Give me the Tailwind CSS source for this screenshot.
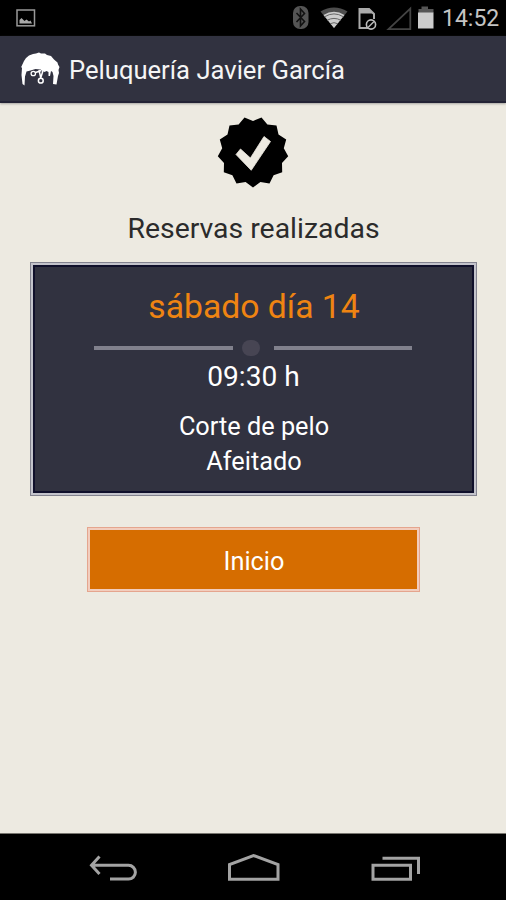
<!DOCTYPE html>
<html lang="es">
<head>
  <meta charset="UTF-8" />
  <meta name="viewport" content="width=device-width, initial-scale=1.0" />
  <title>Peluquería Javier García</title>
  <script src="https://cdn.jsdelivr.net/npm/@tailwindcss/browser@4"></script>
</head>
<body class="bg-[#edeae1] font-[Roboto,sans-serif]">
  <div class="flex flex-col w-[506px] h-[900px] overflow-hidden">

    <!-- Status bar -->
    <div class="flex items-center justify-between h-9 shrink-0 bg-black pl-4 pr-2">
      <svg class="w-5 h-[18px]" viewBox="0 0 20 18" fill="none">
        <rect x="1" y="1" width="17.5" height="15.8" stroke="#999" stroke-width="1.5" />
        <path d="M3.500 14.500V11l2-2 3 3 2-1.500 2.500 2 1.500-1 1.500 3z" fill="#aaa" />
      </svg>
      <div class="flex items-center">
        <svg class="w-[150px] h-9" viewBox="0 0 150 36" fill="none">
          <!-- Bluetooth -->
          <rect x="1" y="6" width="15.500" height="23" rx="7" fill="#555" />
          <path d="M4.500 13l8 8.500-4 4.500V9l4 4.500-8 8.500" stroke="#111" stroke-width="1.600" />
          <!-- Wifi -->
          <path d="M42 28L28.500 11.500Q42 3.500 55.500 11.500z" fill="#4d4d4d" />
          <path d="M42 28L31.500 15Q42 8.500 52.500 15z" fill="#ccc" />
          <path d="M32.500 16.800Q42 11 51.500 16.800M35 20.300Q42 16.500 49 20.300M38 23.800Q42 21.500 46 23.800" stroke="#666" />
          <!-- SIM -->
          <path d="M77.500 28H67.500V9h9.500l5 5v5" stroke="#aaa" stroke-width="2" />
          <path d="M67 8h9.500l5 5.500H67z" fill="#aaa" />
          <circle cx="79" cy="24.500" r="4.600" fill="#000" stroke="#bbb" stroke-width="1.600" />
          <path d="M76 27.500l6-6" stroke="#bbb" stroke-width="1.500" />
          <!-- Signal -->
          <path d="M96.500 29.200L118.300 8.500v20.700z" stroke="#444" stroke-width="1.800" />
          <!-- Battery -->
          <path d="M129.500 6.500h6.500V9h5.500v4H126.500V9h3z" fill="#555" />
          <path d="M126 12.500h15.500V28.500h-15.500z" fill="#ccc" />
        </svg>
        <span class="w-[56px] text-[23px] leading-9 pt-px text-[#c4c4c4] whitespace-nowrap">14:52</span>
      </div>
    </div>

    <!-- Action bar -->
    <header class="flex items-center h-[67px] shrink-0 bg-[#313240] border-b-2 border-[#232335] shadow-[0_1px_2px_#77777799] pl-[21px]">
      <svg class="w-[39px] h-[34px] mt-px" viewBox="0 0 39 34">
        <path d="M1.500 32L.5 23l.5-7-.8-1L3 9l2-3 3-2.500L12 2l3-.5L18 .5l2 1 4 0 2 1.500 4 1 3 3.500 3.500 3 .5 2 1.500 2.500-1 3 .5 3-1 3-1.500 8.500-3.500-.5.500-8-1-4-1.500-1-1 5-1.500 0 0-4-2-1-2 1-4-2.500-5-.5-5 1.500-4 1-1.500 5-.5 9z" fill="#fff" />
        <path d="M14.500 20.500l6-2M18 18l1.800 8M22.500 17l-2.800 9" stroke="#fff" stroke-width="1.500" fill="none" />
        <circle cx="12.300" cy="21.500" r="2.200" fill="none" stroke="#fff" stroke-width="1.300" />
        <circle cx="19.800" cy="28.700" r="2.400" fill="none" stroke="#fff" stroke-width="1.500" />
      </svg>
      <h1 class="mt-[4px] ml-[9px] text-[25.600px] text-[#f5f5f5] whitespace-nowrap">Peluquería Javier García</h1>
    </header>

    <main class="flex flex-col items-center grow pt-[13px]">
      <svg class="w-[72px] h-[72px]" viewBox="-36 -36 72 72">
        <path d="M0 35.500L7.400 30.100 16.500 31.400 20.600 23.200 29.200 20.200 29 11 35.200 4.300 30.800-3.700 33.200-12.600 25.500-17.600 23.500-26.600 14.400-27.500 8.500-34.500 0-31-8.500-34.500-14.400-27.500-23.500-26.600-25.500-17.600-33.200-12.600-30.800-3.700-35.200 4.300-29 11-29.200 20.200-20.600 23.200-16.500 31.400-7.400 30.100z" fill="#000" />
        <path d="M-17 2.500L-1.800 18.300 17.500-10.500 11-15.500-2.600 6-12.500-3z" fill="#edeae1" stroke="#edeae1" stroke-width=".8" />
      </svg>

      <h2 class="mt-[21px] pl-px text-[28.400px] leading-10 text-[#2b2b2b] whitespace-nowrap">Reservas realizadas</h2>

      <!-- Booking -->
      <section class="mt-[13px] w-[447px] h-[234px] shrink-0 border border-[#83838f] bg-[#c3c3cb] p-[2px]">
        <div class="flex flex-col items-center h-full border-2 border-[#10102b] bg-[#313240] text-white whitespace-nowrap">
          <p class="mt-[18px] pl-[2px] text-[33.700px] leading-[44px] text-[#ef8412]">sábado día 14</p>
          <div class="flex items-center w-[318px] h-4 mt-[11px]">
            <div class="w-[139px] h-1 bg-[#81818d]"></div>
            <div class="ml-[9px] w-[18px] h-4 rounded-full bg-[#474553]"></div>
            <div class="ml-auto w-[138px] h-1 bg-[#81818d]"></div>
          </div>
          <p class="mt-px pl-px text-[28.100px] leading-10">09:30 h</p>
          <p class="mt-[12px] pl-[2px] text-[25.300px] leading-[35px]">Corte de pelo</p>
          <p class="pl-[2px] text-[25.300px] leading-[35px]">Afeitado</p>
        </div>
      </section>

      <button class="mt-[31px] w-[333px] h-[65px] shrink-0 border border-[#e5a58e] bg-[#f2cdbd] p-[2px]">
        <span class="flex items-center justify-center h-full pt-[4px] pl-[2px] bg-[#d66d00] text-[25.300px] text-white">Inicio</span>
      </button>
    </main>

    <!-- Navigation bar -->
    <nav class="h-[67px] shrink-0 bg-black border-t border-[#77756f]">
      <svg class="w-[506px] h-[66px]" viewBox="0 0 506 66" fill="none" stroke="#a3a3a3" stroke-width="3">
        <path d="M99.500 22.500L91.500 31.300 99.500 40M92 31.300h36.500a6.900 6.900 0 0 1 0 13.800H110" />
        <path d="M229.500 45.300V30.500L253.500 21.500 278 30.500v14.800z" />
        <path d="M373 31.300h37.500v14H373zM382.500 24.300h36V40" />
      </svg>
    </nav>

  </div>
</body>
</html>
